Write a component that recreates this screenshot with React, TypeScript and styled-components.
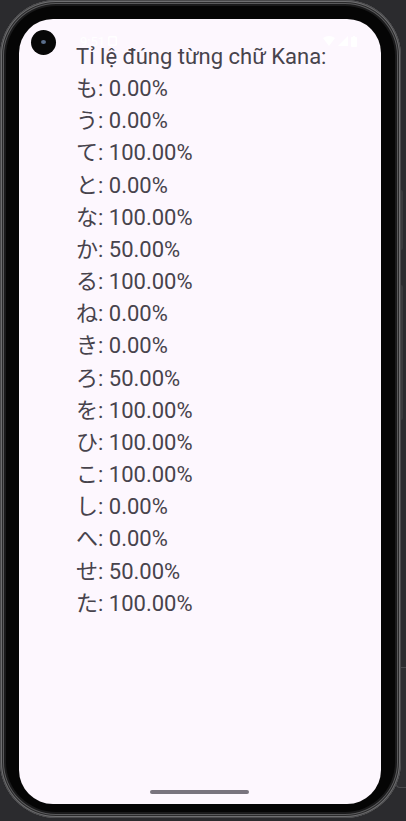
import React from "react";
import styled, { createGlobalStyle } from "styled-components";

const Global = createGlobalStyle`
  html, body { margin: 0; padding: 0; background: #2b2b2e; }
  body { width: 406px; height: 821px; overflow: hidden; }
`;

const Stage = styled.div`
  position: relative;
  width: 406px;
  height: 821px;
  background: #2b2b2e;
`;

const Phone = styled.div`
  position: relative;
  box-sizing: border-box;
  width: 401px;
  height: 818px;
  border-radius: 56px;
  background: #050505;
  padding: 19px 20px 14px 19px;
  box-shadow:
    inset 0 0 0 1px #4a4a4c,
    inset 0 0 0 2px #6e6e70,
    inset 0 0 0 3px #2a2a2b,
    inset 0 0 0 4px #5a5a5c,
    inset 0 0 0 6px #1a1a1b;
`;

const Screen = styled.div`
  position: relative;
  display: flex;
  flex-direction: column;
  width: 100%;
  height: 100%;
  border-radius: 34px;
  background: #fdf7fe;
  overflow: hidden;
`;

const Camera = styled.div`
  position: absolute;
  left: 12px;
  top: 11px;
  width: 25px;
  height: 25px;
  border-radius: 50%;
  background: #070707;
  &::after {
    content: "";
    position: absolute;
    left: 10px;
    top: 10px;
    width: 5px;
    height: 4px;
    border-radius: 50%;
    background: #5b6f8c;
  }
`;

const StatusBar = styled.div`
  position: absolute;
  left: 61px;
  right: 24px;
  top: 15px;
  height: 14px;
  display: flex;
  align-items: center;
  justify-content: space-between;
  color: #ffffff;
  font-family: Roboto, "Liberation Sans", sans-serif;
  font-size: 13px;
`;

const Clock = styled.div`
  display: flex;
  align-items: center;
  gap: 3px;
`;

const Icons = styled.div`
  display: flex;
  align-items: center;
  gap: 3px;
`;

const Content = styled.div`
  display: flex;
  flex-direction: column;
  padding: 22px 0 0 57px;
  font-family: Roboto, "Noto Sans CJK JP", sans-serif;
  font-size: 22px;
  line-height: 32.15px;
  color: #47434c;
`;

const Line = styled.div`
  white-space: nowrap;
`;

const HomeBar = styled.div`
  position: absolute;
  left: 131px;
  bottom: 10px;
  width: 99px;
  height: 4px;
  border-radius: 2px;
  background: #79747e;
`;

const SideButton = styled.div<{ $top: number; $h: number }>`
  position: absolute;
  left: 400px;
  top: ${(p) => p.$top}px;
  width: 3px;
  height: ${(p) => p.$h}px;
  border-radius: 0 2px 2px 0;
  background: #3a3a3c;
`;

const SidePanel = styled.div`
  position: absolute;
  left: 396px;
  top: 667px;
  width: 20px;
  height: 119px;
  border-radius: 4px 0 0 4px;
  background: #2e2e31;
  border: 1px solid #4a4a4d;
  border-right: none;
`;

const rows: [string, string][] = [
  ["も", "0.00%"],
  ["う", "0.00%"],
  ["て", "100.00%"],
  ["と", "0.00%"],
  ["な", "100.00%"],
  ["か", "50.00%"],
  ["る", "100.00%"],
  ["ね", "0.00%"],
  ["き", "0.00%"],
  ["ろ", "50.00%"],
  ["を", "100.00%"],
  ["ひ", "100.00%"],
  ["こ", "100.00%"],
  ["し", "0.00%"],
  ["へ", "0.00%"],
  ["せ", "50.00%"],
  ["た", "100.00%"],
];

export default function App() {
  return (
    <Stage>
      <Global />
      <SideButton $top={190} $h={60} />
      <SideButton $top={285} $h={135} />
      <SidePanel />
      <Phone>
        <Screen>
          <Content>
            <Line>Tỉ lệ đúng từng chữ Kana:</Line>
            {rows.map(([k, v]) => (
              <Line key={k}>
                {k}: {v}
              </Line>
            ))}
          </Content>
          <StatusBar>
            <Clock>
              <span>9:51</span>
              <svg width="9" height="10" viewBox="0 0 9 10">
                <rect x="0.75" y="0.75" width="7.5" height="8.5" rx="1" fill="none" stroke="#fff" strokeWidth="1.5" />
              </svg>
            </Clock>
            <Icons>
              <svg width="12" height="10" viewBox="0 0 12 10">
                <path d="M0 2 Q6 -2 12 2 L6 10 Z" fill="#fff" />
              </svg>
              <svg width="10" height="10" viewBox="0 0 10 10">
                <path d="M10 0 L10 10 L0 10 Z" fill="#fff" />
              </svg>
              <svg width="6" height="11" viewBox="0 0 6 11">
                <rect x="0" y="1" width="6" height="10" rx="1" fill="#fff" />
                <rect x="2" y="0" width="2" height="1" fill="#fff" />
              </svg>
            </Icons>
          </StatusBar>
          <Camera />
          <HomeBar />
        </Screen>
      </Phone>
    </Stage>
  );
}
